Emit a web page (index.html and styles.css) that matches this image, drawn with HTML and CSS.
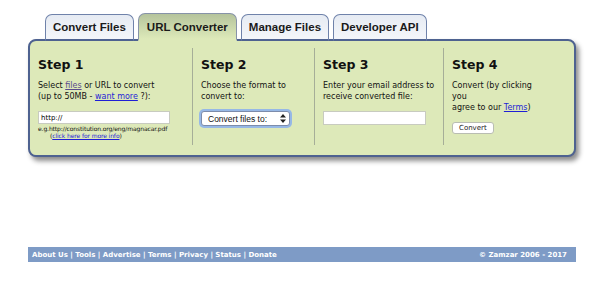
FILE: index.html
```html
<!DOCTYPE html>
<html lang="en">
<head>
  <meta charset="UTF-8" />
  <title>Zamzar - URL Converter</title>
  <link rel="stylesheet" href="styles.css">
</head>
<body>

  <div class="page">

    <!-- tabs -->
    <div class="tabs">
      <div class="tab">Convert Files</div>
      <div class="tab active">URL Converter</div>
      <div class="tab">Manage Files</div>
      <div class="tab">Developer API</div>
    </div>

    <!-- converter panel -->
    <div class="panel">
      <div class="step">
        <h2>Step 1</h2>
        <p>Select <a href="#" class="visited">files</a> or URL to convert<br>(up to 50MB - <a href="#">want more</a> ?):</p>
        <input type="text" class="url" value="http://">
        <div class="hint">e.g.http://constitution.org/eng/magnacar.pdf</div>
        <div class="hint more">(<a href="#">click here for more info</a>)</div>
      </div>

      <div class="step">
        <h2>Step 2</h2>
        <p>Choose the format to convert to:</p>
        <div class="select">
          <span>Convert files to:</span>
          <svg width="6" height="9" viewBox="0 0 6 9"><path d="M3 0 L6 3.4 H0 Z M3 9 L6 5.6 H0 Z" fill="#222"/></svg>
        </div>
      </div>

      <div class="step">
        <h2>Step 3</h2>
        <p>Enter your email address to receive converted file:</p>
        <input type="text" class="email">
      </div>

      <div class="step">
        <h2>Step 4</h2>
        <p class="narrow">Convert (by clicking you<br>agree to our <a href="#">Terms</a>)</p>
        <button>Convert</button>
      </div>
    </div>

    <!-- footer -->
    <div class="footer">
      <div class="links">About Us | Tools | Advertise | Terms | Privacy | Status | Donate</div>
      <div class="copy">&copy; Zamzar 2006 - 2017</div>
    </div>

  </div>

</body>
</html>
```

FILE: styles.css
```css
body {
  margin: 0;
  background: #fff;
  font-family: 'DejaVu Sans', Verdana, sans-serif;
  color: #111;
}

.page {
  width: 548px;
  padding: 14px 0 0 28px;
}

/* tabs */
.tabs {
  display: flex;
  gap: 4px;
  padding-left: 17px;
  margin-bottom: -2px;
  position: relative;
  z-index: 2;
}

.tab {
  height: 24px;
  padding: 0 7px;
  display: flex;
  align-items: center;
  font-family: 'Liberation Sans', Arial, sans-serif;
  font-weight: bold;
  font-size: 11.5px;
  color: #1a1a1a;
  background: linear-gradient(to bottom, #e6ebf3, #f4f6fa);
  border: 1px solid #6f82aa;
  border-bottom: 2px solid #4e6290;
  border-radius: 7px 7px 0 0;
}

.tab.active {
  height: 25px;
  margin-top: -1px;
  padding: 0 8px;
  background: linear-gradient(to bottom, #b5c49c, #dde9b9);
  border-color: #8793a8;
  border-bottom: 2px solid #dde9b9;
}

/* panel */
.panel {
  display: grid;
  grid-template-columns: 162px 122px 129px 1fr;
  height: 97px;
  padding: 7px 0 10px;
  background: #dde9b9;
  border: 2px solid #4e6290;
  border-radius: 8px;
  box-shadow: 3px 4px 5px rgba(0, 0, 0, 0.45);
}

.step {
  padding: 10px 7px 0 8px;
  border-left: 1px solid #a6ae98;
}

.step:first-child {
  border-left: none;
  padding-left: 8px;
}

.step h2 {
  margin: 0;
  font-size: 12.5px;
  line-height: 14px;
  font-weight: bold;
}

.step p {
  margin: 8px 0 0;
  font-size: 8px;
  line-height: 11px;
}

.step p.narrow {
  width: 96px;
}

a {
  color: #1f1fd6;
}

a.visited {
  color: #5a4b8c;
}

input {
  display: block;
  margin: 9px 0 0;
  height: 13px;
  padding: 0 2px;
  border: 1px solid #c8cbc0;
  background: #fff;
  font-family: 'DejaVu Sans', Verdana, sans-serif;
  font-size: 7px;
  box-sizing: border-box;
}

input.url {
  width: 132px;
}

input.email {
  width: 103px;
  height: 14px;
}

.hint {
  font-size: 6px;
  line-height: 7px;
  margin-top: 1px;
  letter-spacing: -0.1px;
}

.hint.more {
  margin: 0 0 0 12px;
}

/* fake select */
.select {
  margin-top: 9px;
  width: 78px;
  height: 13px;
  display: flex;
  align-items: center;
  justify-content: space-between;
  padding: 0 3px 0 6px;
  background: #fff;
  border: 1px solid #7d8cab;
  border-radius: 3px;
  box-shadow: 0 0 0 2px #96b8e6;
  font-family: 'Liberation Sans', Arial, sans-serif;
  font-size: 8.5px;
  box-sizing: content-box;
}

button {
  margin-top: 9px;
  height: 12px;
  padding: 0 6px;
  background: #fff;
  border: 1px solid #b9bdb2;
  border-radius: 3px;
  font-family: 'DejaVu Sans', Verdana, sans-serif;
  font-size: 7px;
  color: #222;
  line-height: 10px;
}

/* footer */
.footer {
  margin-top: 90px;
  height: 15px;
  display: flex;
  align-items: center;
  justify-content: space-between;
  padding: 0 9px 0 4px;
  background: #7e9bc6;
  color: #fff;
  font-weight: bold;
  font-size: 7px;
}
```
